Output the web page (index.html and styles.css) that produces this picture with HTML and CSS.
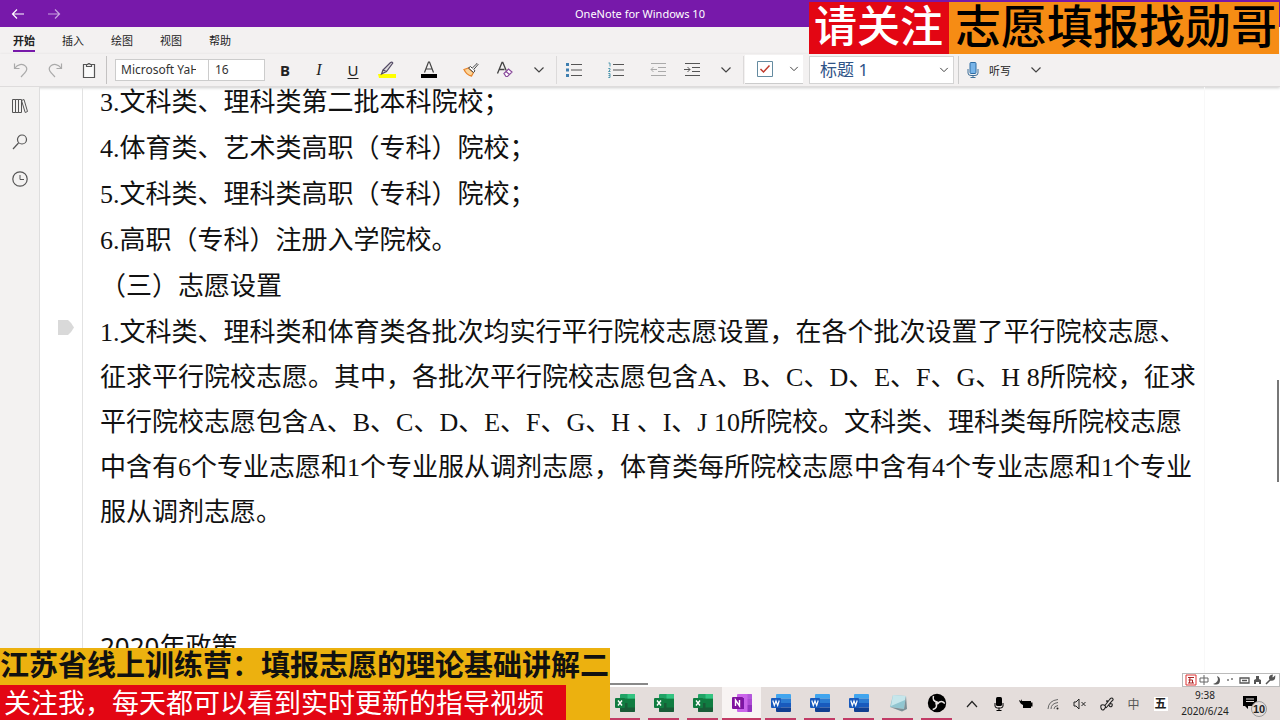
FILE: index.html
```html
<!DOCTYPE html>
<html lang="zh-CN">
<head>
<meta charset="utf-8">
<title>OneNote for Windows 10</title>
<link rel="stylesheet" href="styles.css">
</head>
<body>
<svg class="defs" aria-hidden="true">
  <symbol id="chev" viewBox="0 0 12 12"><path d="M1.5 3.5 6 8l4.5-4.5" fill="none" stroke="#444" stroke-width="1.2"/></symbol>
  <symbol id="excel" viewBox="0 0 20 20"><rect x="5" y="1" width="15" height="18" rx="1" fill="#21a366"/><path d="M5 5.500h15v4.500H5z" fill="#107c41"/><path d="M12.500 1H19a1 1 0 0 1 1 1v3.500h-7.500z" fill="#33c481"/><path d="M5 10h15v8a1 1 0 0 1-1 1H6a1 1 0 0 1-1-1z" fill="#185c37"/><path d="M12.500 10H20v4.500h-7.500z" fill="#107c41"/><rect y="5" width="10" height="10" rx="1" fill="#107c41"/><path d="m3 7.500 4 5M7 7.500l-4 5" stroke="#fff" stroke-width="1.4"/></symbol>
  <symbol id="word" viewBox="0 0 20 20"><path d="M5 2a1 1 0 0 1 1-1h13a1 1 0 0 1 1 1v3.500H5z" fill="#41a5ee"/><path d="M5 5.500h15V10H5z" fill="#2b7cd3"/><path d="M5 10h15v4.500H5z" fill="#185abd"/><path d="M5 14.500h15V18a1 1 0 0 1-1 1H6a1 1 0 0 1-1-1z" fill="#103f91"/><rect y="5" width="10" height="10" rx="1" fill="#185abd"/><path d="m1.800 7.500 1.500 5L5 8l1.700 4.500 1.500-5" fill="none" stroke="#fff" stroke-width="1.2"/></symbol>
  <symbol id="onenote" viewBox="0 0 20 20"><rect x="5" y="1" width="15" height="18" rx="1" fill="#ca64ea"/><path d="M15.500 1H19a1 1 0 0 1 1 1v4h-4.500z" fill="#b458dc"/><path d="M15.500 6H20v6h-4.500z" fill="#ae4bd5"/><path d="M15.500 12H20v6a1 1 0 0 1-1 1h-3.500z" fill="#9332bf"/><path d="M5 5h7v11H5z" fill="#7719aa"/><rect y="4" width="11" height="12" rx="1" fill="#80139f"/><path d="M3.500 13V7l4 6V7" fill="none" stroke="#fff" stroke-width="1.4"/></symbol>
</svg>

<div class="app">
  <header class="titlebar">
    <nav class="history">
      <button aria-label="后退"><svg width="14" height="12" viewBox="0 0 14 12"><path d="M13 6H1.500M6 1.500 1.500 6 6 10.500" fill="none" stroke="#fff" stroke-width="1.200"/></svg></button>
      <button aria-label="前进"><svg width="14" height="12" viewBox="0 0 14 12"><path d="M1 6h11.500M8 1.500 12.500 6 8 10.500" fill="none" stroke="#c9a4e0" stroke-width="1.200"/></svg></button>
    </nav>
    <h1>OneNote for Windows 10</h1>
  </header>

  <nav class="tabs">
    <button class="active">开始</button><button>插入</button><button>绘图</button><button>视图</button><button>帮助</button>
  </nav>

  <div class="toolbar">
    <div class="group first">
      <button aria-label="撤消"><svg width="16" height="16" viewBox="0 0 16 16"><path d="M1.500 1.500v5h5M2 6C4.500 2.500 9.500 1 12.500 4.200c2.800 3 .8 5.300-1 7L8 15" fill="none" stroke="#aaa" stroke-width="1.200"/></svg></button>
      <button aria-label="恢复"><svg width="16" height="16" viewBox="0 0 16 16"><path d="M14.500 1.500v5h-5M14 6C11.500 2.500 6.500 1 3.500 4.200c-2.800 3-.8 5.300 1 7L8 15" fill="none" stroke="#aaa" stroke-width="1.200"/></svg></button>
      <button aria-label="粘贴"><svg width="14" height="16" viewBox="0 0 14 16"><path d="M4 2.500H1.500v13h11v-13H10M4.500 4.500v-2h1.200a1.400 1.400 0 0 1 2.600 0h1.200v2z" fill="#fafafa" stroke="#555" stroke-width="1.200"/></svg></button>
    </div>
    <div class="group">
      <div class="font">
        <input class="family" aria-label="字体" value="Microsoft YaHei">
        <input class="size" aria-label="字号" value="16">
      </div>
      <button class="bold">B</button>
      <button class="italic">I</button>
      <button class="under">U</button>
      <button class="wide" aria-label="突出显示"><svg width="20" height="18" viewBox="0 0 20 18"><path d="M1 13h18v4H2z" fill="#ff0"/><path d="m6 9 7.500-7.500q1.500-.8 2.300.5L9.500 10.500zM6 9l-1.500 4 5-2.500" fill="#ddd" stroke="#554b66" stroke-width="1.200"/></svg></button>
      <button class="wide" aria-label="字体颜色"><svg width="18" height="18" viewBox="0 0 18 18"><path d="M4.500 11.500 8.500 1h1l4 10.500M6 8h6" fill="none" stroke="#444" stroke-width="1.200"/><path d="M1 13h16v4H1z"/></svg></button>
      <button aria-label="格式刷"><svg width="16" height="16" viewBox="0 0 16 16"><path d="M1 7.500 5.500 6l5 4.500L8.500 14q-5-1-7.500-6.500z" fill="#fbd49a" stroke="#e8842a" stroke-width="1.300"/><path d="m5.500 6 2-1.500 1.700 1.700L14 1.500l1 1-4.300 5L12 8.800l-1.500 1.700z" fill="#fff" stroke="#444"/></svg></button>
      <button aria-label="清除格式"><svg width="18" height="17" viewBox="0 0 18 17"><path d="M1.500 12.500 6 1.500h.8l3.400 8M3 8.500h5.500" fill="none" stroke="#444" stroke-width="1.300"/><path d="m8 12.500 4.500-4.500 3.500 3-4.500 4.500H10zM10 10.500l3.500 3" fill="#fff" stroke="#8a4a9c" stroke-width="1.200"/></svg></button>
      <button aria-label="更多"><svg width="12" height="12"><use href="#chev"/></svg></button>
    </div>
    <div class="group">
      <button class="wide" aria-label="项目符号"><svg width="16" height="16" viewBox="0 0 16 16"><path d="M5 2.500h11M5 8h11M5 13.500h11" stroke="#555"/><path d="M0 1h3v3H0zM0 6.500h3v3H0zM0 12h3v3H0z" fill="#3f7fb0"/></svg></button>
      <button class="wide" aria-label="编号"><svg width="16" height="16" viewBox="0 0 16 16"><path d="M5 2.500h11M5 8h11M5 13.500h11" stroke="#555"/><path d="M.5 1H2v3.500M.3 6.500H2V8L.5 9.500h2M.3 11.500H2v4H.3M.5 13.500H2" fill="none" stroke="#3f8fa8" stroke-width=".9"/></svg></button>
      <button aria-label="减少缩进"><svg width="16" height="16" viewBox="0 0 16 16"><path d="M1 1.500h15M8 5.500h8M8 9.500h8M1 13.500h15M7 7.500H1M3.500 5 1 7.500 3.500 10" fill="none" stroke="#aaa"/></svg></button>
      <button aria-label="增加缩进"><svg width="16" height="16" viewBox="0 0 16 16"><path d="M1 1.500h15M8 5.500h8M8 9.500h8M1 13.500h15M0 7.500h6M3.500 5 6 7.500 3.500 10" fill="none" stroke="#555"/></svg></button>
      <button aria-label="更多段落选项"><svg width="12" height="12"><use href="#chev"/></svg></button>
    </div>
    <div class="todo">
      <button aria-label="待办事项"><svg width="16" height="16" viewBox="0 0 16 16"><path d="M.5.500h15v15H.5z" fill="#fff" stroke="#648ba0"/><path d="m3.500 8 3 3L12.500 4.500" fill="none" stroke="#c0392b" stroke-width="1.500"/></svg></button>
      <button aria-label="更多标记"><svg width="10" height="10"><use href="#chev"/></svg></button>
    </div>
    <label class="style">
      <select aria-label="样式"><option>标题 1</option></select>
      <svg width="10" height="10"><use href="#chev"/></svg>
    </label>
    <div class="dictate">
      <button><svg width="12" height="16" viewBox="0 0 12 16"><rect x="3" y=".5" width="6" height="11" rx="1" fill="#78b4e8" stroke="#2e6da4"/><path d="M1 7v4q0 2.500 3 2.500h4q3 0 3-2.500V7M6 13.500V15M3.500 15.500h5" fill="none" stroke="#3f6f98"/></svg>听写</button>
      <button aria-label="更多听写选项"><svg width="12" height="12"><use href="#chev"/></svg></button>
    </div>
  </div>

  <main class="workspace">
    <nav class="rail">
      <button aria-label="笔记本"><svg width="16" height="14" viewBox="0 0 16 14"><path d="M.5.500h3v13h-3zM3.500.500h3v13h-3zM6.500.500h3v13h-3zM9.500 1.500l2.500-1 3.500 12-2.300 1z" fill="none" stroke="#555"/></svg></button>
      <button aria-label="搜索"><svg width="16" height="16" viewBox="0 0 16 16"><circle cx="10" cy="5.500" r="4.500" fill="none" stroke="#555" stroke-width="1.200"/><path d="M6.500 9 1 15" stroke="#555" stroke-width="1.200"/></svg></button>
      <button aria-label="最近的笔记"><svg width="16" height="16" viewBox="0 0 16 16"><circle cx="8" cy="8" r="7.200" fill="none" stroke="#555" stroke-width="1.200"/><path d="M8 4v4.500h4" fill="none" stroke="#555"/></svg></button>
    </nav>
    <div class="gutter">
      <svg class="handle" width="16" height="15" viewBox="0 0 16 15"><path d="M0 0h10q3 2 6 7.500Q13 13 10 15H0z" fill="#d9d9d9"/></svg>
    </div>
    <article class="note">
      <p>3.文科类、理科类第二批本科院校；</p>
      <p>4.体育类、艺术类高职（专科）院校；</p>
      <p>5.文科类、理科类高职（专科）院校；</p>
      <p>6.高职（专科）注册入学院校。</p>
      <p>（三）志愿设置</p>
      <p class="long">1.文科类、理科类和体育类各批次均实行平行院校志愿设置，在各个批次设置了平行院校志愿、征求平行院校志愿。其中，各批次平行院校志愿包含A、B、C、D、E、F、G、H 8所院校，征求平行院校志愿包含A、B、C、D、E、F、G、H 、I、J 10所院校。文科类、理科类每所院校志愿中含有6个专业志愿和1个专业服从调剂志愿，体育类每所院校志愿中含有4个专业志愿和1个专业服从调剂志愿。</p>
      <h2>2020年政策</h2>
    </article>
    <div class="margin"><span class="vscroll"></span></div>
    <span class="hscroll"></span>
    <div class="ime">
      <svg width="92" height="12" viewBox="0 0 92 12"><path d="M1 1h10v10H1z" fill="#fff" stroke="#d33"/><path d="M3 3.500h6M3 9h6M5 3.500 4.500 9M3.500 6h4V9" fill="none" stroke="#a22"/><path d="M15 4h8v4h-8zM19 1v10" fill="none" stroke="#666"/><path d="M32 2q3 6-4 8 7 2 7-4 0-3-3-4z" fill="#555"/><path d="M42 6h2M46 5h2" stroke="#777" stroke-width="1.500"/><path d="M55 4h9v5h-9zM57 6.500h5" fill="none" stroke="#555" stroke-width="1.300"/><path d="M71 2h3v3l2 1v4h-2V8h-3v2h-2V6l2-1z" fill="#555"/><path d="m81 10 5-5M85 5q-1-3 2-3.500L86.500 4l2 0 1-1q0 3-3 3z" fill="#555" stroke="#555" stroke-width="1.500"/></svg>
    </div>
  </main>

  <footer class="taskbar">
    <div class="tasks">
      <button aria-label="Excel"><svg width="20" height="20"><use href="#excel"/></svg></button>
      <button aria-label="Excel"><svg width="20" height="20"><use href="#excel"/></svg></button>
      <button aria-label="Excel"><svg width="20" height="20"><use href="#excel"/></svg></button>
      <button class="current" aria-label="OneNote"><svg width="20" height="20"><use href="#onenote"/></svg></button>
      <button aria-label="Word"><svg width="20" height="20"><use href="#word"/></svg></button>
      <button aria-label="Word"><svg width="20" height="20"><use href="#word"/></svg></button>
      <button aria-label="Word"><svg width="20" height="20"><use href="#word"/></svg></button>
      <button aria-label="记事本"><svg width="20" height="20" viewBox="0 0 20 20"><path d="m5 2 13 1-2 13-14-2z" fill="#91c6d1"/><path d="m5 2 13 1-1 4L3 13z" fill="#c6e6eb"/><path d="m18 3 1 13-5 2.500L2 14l14 2z" fill="#7c8f96"/></svg></button>
      <button aria-label="OBS"><svg width="20" height="20" viewBox="0 0 20 20"><circle cx="10" cy="10" r="9.200" fill="#000"/><g fill="none" stroke="#e8e4e2" stroke-width="1.500"><path d="M10 9Q5 8 6.500 3"/><path d="M10 9Q5 8 6.500 3" transform="rotate(120 10 10)"/><path d="M10 9Q5 8 6.500 3" transform="rotate(240 10 10)"/></g><circle cx="10" cy="10" r="1.800" fill="#e8e4e2"/></svg></button>
    </div>
    <div class="tray">
      <button aria-label="显示隐藏的图标"><svg width="12" height="8" viewBox="0 0 12 8"><path d="m1 7 5-5.500L11 7" fill="none" stroke="#222" stroke-width="1.200"/></svg></button>
      <button aria-label="麦克风"><svg width="10" height="14" viewBox="0 0 10 14"><rect x="2" width="6" height="9" rx="1.500"/><path d="M1 6v3q0 2 2.500 2h3Q9 11 9 9V6M5 11v2.500M2.500 13.500h5" fill="none" stroke="#000"/></svg></button>
      <button aria-label="电池"><svg width="14" height="12" viewBox="0 0 14 12"><path d="M3 3h9v1.500h1.500v4H12V10H4V7Q1 6 0 2l2 1V1z"/></svg></button>
      <button aria-label="网络"><svg width="12" height="12" viewBox="0 0 12 12"><path d="M1 11Q1.500 2.500 11 1.500M4 11Q4 5.500 11 4.500M7 11q0-3 4-3.500" fill="none" stroke="#666"/><circle cx="10.500" cy="10.500" r="1" fill="#222"/></svg></button>
      <button aria-label="音量"><svg width="14" height="12" viewBox="0 0 14 12"><path d="M1 4h2l3-3v10L3 8H1zM8.500 4l4 4M12.500 4l-4 4" fill="none" stroke="#222"/></svg></button>
      <button aria-label="触笔"><svg width="14" height="14" viewBox="0 0 14 14"><path d="M1 11q-1-4 3-3 3 1 0 4.500Q2 14 1 11zM4.500 9 10 2q2-2 3 0 .5 1-1 2L6 11M8 4q-2-1-1 1M10 7q3-1 2 2-2 2-3-1" fill="none" stroke="#222" stroke-width="1.100"/></svg></button>
      <span class="lang">中</span>
      <span class="input-mode"><b>五</b></span>
      <time><span>9:38</span><span>2020/6/24</span></time>
      <button class="notify" aria-label="通知"><svg width="14" height="13" viewBox="0 0 14 13"><path d="M0 0h14v10H5v3l-3-3H0z"/><path d="M3 3h8M3 5.500h8" stroke="#e4dddb"/></svg><span class="count">10</span></button>
    </div>
  </footer>
</div>

<aside class="banner top"><strong class="follow">请关注</strong><strong class="brand">志愿填报找勋哥</strong></aside>
<aside class="banner bottom">
  <strong class="course">江苏省线上训练营：填报志愿的理论基础讲解二</strong>
  <span class="slogan">关注我，每天都可以看到实时更新的指导视频</span>
</aside>
</body>
</html>
```

FILE: styles.css
```css
* { box-sizing: border-box; }
body {
  margin: 0;
  font-family: "Noto Sans", "Noto Sans CJK SC", sans-serif;
  font-size: 11px;
  color: #222;
  overflow: hidden;
}
button { border: 0; padding: 0; background: none; font: inherit; color: inherit; }
svg { display: block; flex: none; }
.defs { position: absolute; width: 0; height: 0; }

.app { display: flex; flex-direction: column; height: 100vh; background: #fff; }

.titlebar {
  display: grid;
  grid-template-columns: 1fr auto 1fr;
  align-items: center;
  height: 27px;
  flex: none;
  background: #7719aa;
  color: #fff;
}
.history { display: flex; gap: 22px; padding-left: 11px; }
.titlebar h1 { margin: 0; font-size: 11px; font-weight: 400; }

.tabs {
  display: flex;
  gap: 27px;
  flex: none;
  height: 27px;
  padding: 2px 13px;
  background: #f3f1f1;
}
.tabs button { height: 23px; padding: 0; border-bottom: 2px solid transparent; }
.tabs .active { font-weight: 700; border-bottom-color: #7719aa; }

.toolbar {
  position: relative;
  display: flex;
  align-items: center;
  flex: none;
  height: 33px;
  padding-bottom: 1px;
  background: #f3f1f1;
  border-bottom: 1px solid #dedcdc;
  box-shadow: 0 1px 3px #ccc;
}
.toolbar button {
  display: flex;
  align-items: center;
  justify-content: center;
  width: 34px;
  height: 28px;
}
.toolbar button.wide { margin-right: 8px; }
.group { display: flex; align-items: center; border-right: 1px solid #dcdada; }
.first { padding-left: 4px; border-color: #c4c2c2; }
.font { display: flex; margin: 0 3px 0 8px; }
.font input {
  height: 22px;
  border: 1px solid #ccc;
  background: #fff;
  font: 12px "Noto Sans", sans-serif;
  color: #333;
}
.font .family { width: 94px; padding: 0 12px 0 5px; }
.font .size { width: 56px; padding: 0 6px; border-left: 0; }
.toolbar .bold { font-size: 15px; font-weight: 700; }
.toolbar .italic { font: italic 16px "Liberation Serif", serif; }
.toolbar .under { font-size: 15px; text-decoration: underline; text-underline-offset: 2px; }

.todo { display: flex; margin: 0 6px 0 1px; background: #fff; border-bottom: 1px solid #ccc; }
.toolbar .todo button { width: 18px; }
.toolbar .todo button:first-child { width: 40px; }
.style { display: flex; align-items: center; }
.style select {
  appearance: none;
  width: 145px;
  height: 28px;
  padding: 0 24px 0 10px;
  border: 1px solid #d4d4d4;
  background: #fff;
  color: #2f5487;
  font: 17px "Noto Sans", "Noto Sans CJK SC", sans-serif;
}
.style svg { margin-left: -15px; pointer-events: none; }
.dictate { display: flex; margin-left: 9px; border-left: 1px solid #ccc; }
.toolbar .dictate button:first-child { width: 60px; gap: 10px; }

.workspace { position: relative; display: flex; flex: 1; min-height: 0; overflow: hidden; }
.rail {
  display: flex;
  flex-direction: column;
  align-items: center;
  gap: 21px;
  width: 40px;
  flex: none;
  padding-top: 12px;
  background: #f3f2f1;
  border-right: 1px solid #dedede;
}
.gutter { width: 43px; flex: none; border-right: 1px solid #e2e2e2; }
.handle { margin: 233px 0 0 18px; }
.note {
  flex: 1;
  min-width: 0;
  padding-left: 17px;
  font-family: "Liberation Serif", "Noto Sans CJK SC", serif;
  font-size: 26px;
  line-height: 46px;
  color: #111;
  text-spacing-trim: space-all;
}
.note p { margin: 0; }
.note .long { line-height: 45px; }
.note p:first-child { margin-top: -7px; }
.note h2 {
  margin: 88px 0 0;
  font: 400 26px/46px "Noto Sans", "Noto Sans CJK SC", sans-serif;
}
.margin { display: flex; justify-content: flex-end; width: 76px; flex: none; border-left: 1px solid #f8f8f8; }
.vscroll { width: 2px; height: 102px; margin: 293px 1px 0 0; background: #777; }
.hscroll { position: absolute; left: 240px; bottom: 2px; width: 408px; height: 2px; background: #888; }
.ime {
  position: absolute;
  right: 0;
  bottom: 0;
  padding: 0 2px;
  border: 1px solid #bbb;
  background: #fff;
}

.taskbar { display: flex; justify-content: flex-end; flex: none; height: 33px; padding-right: 4px; background: #e4dddb; }
.tasks, .tray { display: flex; }
.tasks { margin-right: 2px; }
.tasks button {
  display: flex;
  justify-content: center;
  width: 39px;
  padding-top: 6px;
  background: linear-gradient(#c23b66, #c23b66) center bottom / 31px 2px no-repeat;
}
.tasks .current { background-color: #f8f4f3; background-size: 39px 2px; }
.tray button, .tray > span { display: flex; align-items: center; justify-content: center; width: 27px; }
.lang { font-size: 12px; color: #555; }
.input-mode b { width: 14px; background: #fff; font-size: 12px; line-height: 14px; text-align: center; }
.tray time {
  display: flex;
  flex-direction: column;
  align-items: center;
  width: 62px;
  font-size: 10px;
  line-height: 16px;
}
.tray .notify { position: relative; width: 40px; padding: 0 12px 2px 0; }
.count {
  position: absolute;
  left: 15px;
  top: 14px;
  width: 16px;
  height: 16px;
  border: 1px solid #999;
  border-radius: 8px;
  background: #e4dddb;
  font: 700 11px/14px "Liberation Sans", sans-serif;
}

.banner { position: absolute; display: flex; font-family: "Noto Sans CJK SC", sans-serif; white-space: nowrap; text-spacing-trim: space-all; }
.top { top: 2px; right: 1px; height: 52px; line-height: 42px; }
.top strong { font-weight: 500; }
.follow { padding: 0 6px 0 5px; background: #e30613; color: #fff; font-size: 43px; }
.brand { padding: 0 2px 0 6px; background: #f68c14; color: #000; font-size: 46px; }
.bottom { left: 0; bottom: 0; flex-direction: column; align-items: flex-start; background: #ecb10f; }
.course { padding-right: 1px; font-size: 29px; line-height: 30px; height: 37px; color: #111; }
.slogan { height: 35px; padding: 0 22px 0 4px; background: #e30613; color: #fff; font-size: 27px; line-height: 33px; }
```
